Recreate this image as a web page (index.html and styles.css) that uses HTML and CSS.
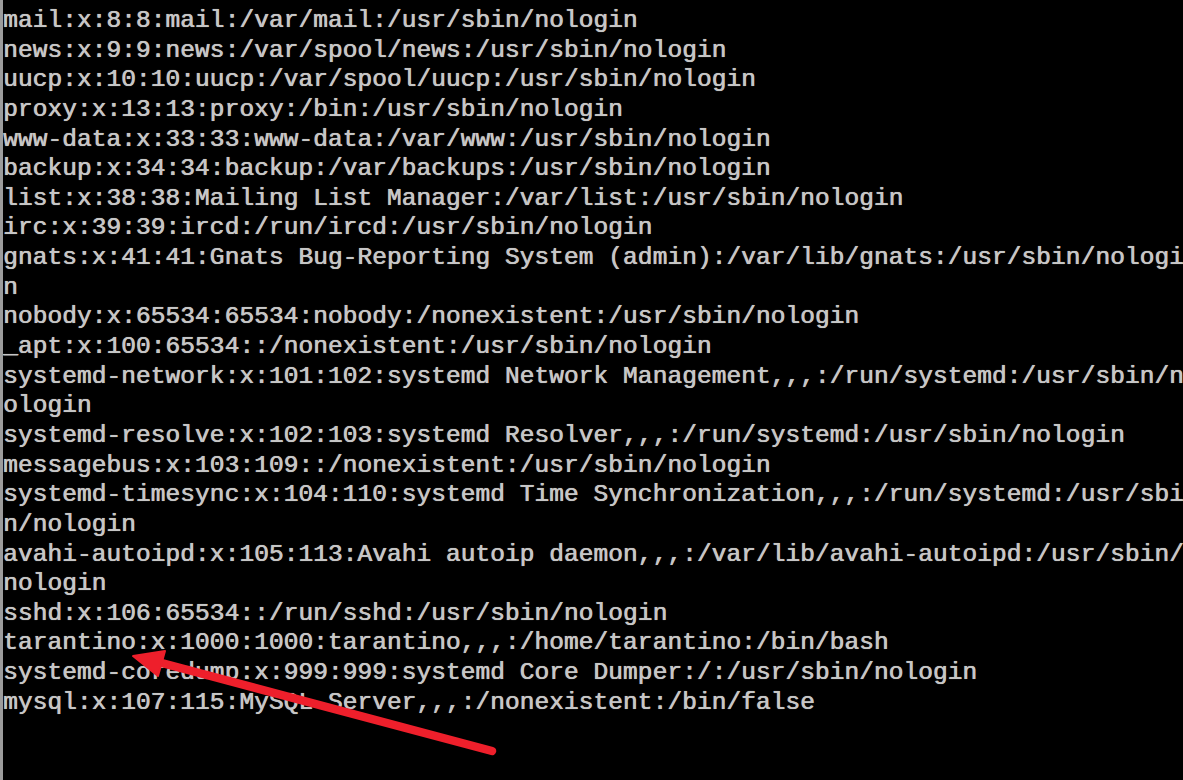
FILE: index.html
```html
<!DOCTYPE html>
<html>
<head>
<meta charset="utf-8">
<link rel="stylesheet" href="styles.css">
</head>
<body>
<div class="screen">
  <div class="console">
    <div class="row">mail:x:8:8:mail:/var/mail:/usr/sbin/nologin</div>
    <div class="row">news:x:9:9:news:/var/spool/news:/usr/sbin/nologin</div>
    <div class="row">uucp:x:10:10:uucp:/var/spool/uucp:/usr/sbin/nologin</div>
    <div class="row">proxy:x:13:13:proxy:/bin:/usr/sbin/nologin</div>
    <div class="row">www-data:x:33:33:www-data:/var/www:/usr/sbin/nologin</div>
    <div class="row">backup:x:34:34:backup:/var/backups:/usr/sbin/nologin</div>
    <div class="row">list:x:38:38:Mailing List Manager:/var/list:/usr/sbin/nologin</div>
    <div class="row">irc:x:39:39:ircd:/run/ircd:/usr/sbin/nologin</div>
    <div class="row">gnats:x:41:41:Gnats Bug-Reporting System (admin):/var/lib/gnats:/usr/sbin/nologi</div>
    <div class="row">n</div>
    <div class="row">nobody:x:65534:65534:nobody:/nonexistent:/usr/sbin/nologin</div>
    <div class="row">_apt:x:100:65534::/nonexistent:/usr/sbin/nologin</div>
    <div class="row">systemd-network:x:101:102:systemd Network Management,,,:/run/systemd:/usr/sbin/n</div>
    <div class="row">ologin</div>
    <div class="row">systemd-resolve:x:102:103:systemd Resolver,,,:/run/systemd:/usr/sbin/nologin</div>
    <div class="row">messagebus:x:103:109::/nonexistent:/usr/sbin/nologin</div>
    <div class="row">systemd-timesync:x:104:110:systemd Time Synchronization,,,:/run/systemd:/usr/sbi</div>
    <div class="row">n/nologin</div>
    <div class="row">avahi-autoipd:x:105:113:Avahi autoip daemon,,,:/var/lib/avahi-autoipd:/usr/sbin/</div>
    <div class="row">nologin</div>
    <div class="row">sshd:x:106:65534::/run/sshd:/usr/sbin/nologin</div>
    <div class="row">tarantino:x:1000:1000:tarantino,,,:/home/tarantino:/bin/bash</div>
    <div class="row">systemd-coredump:x:999:999:systemd Core Dumper:/:/usr/sbin/nologin</div>
    <div class="row">mysql:x:107:115:MySQL Server,,,:/nonexistent:/bin/false</div>
  </div>
  <svg class="arrow" width="1183" height="780" viewBox="0 0 1183 780">
    <line x1="492" y1="751" x2="158" y2="662" stroke="#ee1f2b" stroke-width="8.5" stroke-linecap="round"/>
    <polygon points="133,656 165,651 158,676" fill="#ee1f2b" stroke="#ee1f2b" stroke-width="2" stroke-linejoin="round"/>
  </svg>
</div>
</body>
</html>
```

FILE: styles.css
```css
html, body {
  margin: 0;
  padding: 0;
  background: #000;
}

.screen {
  position: relative;
  width: 1183px;
  height: 780px;
  overflow: hidden;
  background: #000;
}

.console {
  height: 100%;
  box-sizing: border-box;
  border-left: 3px solid #9c9c9c;
  padding-top: 6px;
  font-family: "Liberation Mono", "DejaVu Sans Mono", monospace;
  font-size: 24.6px;
  line-height: 29.65px;
  color: #c6c6c6;
  text-shadow: 0.5px 0 0 #c6c6c6, 0 0 1px rgba(200,200,200,0.6);
}

.row {
  white-space: pre;
  overflow: hidden;
  height: 29.65px;
}

.arrow {
  position: absolute;
  left: 0;
  top: 0;
  pointer-events: none;
}
```
